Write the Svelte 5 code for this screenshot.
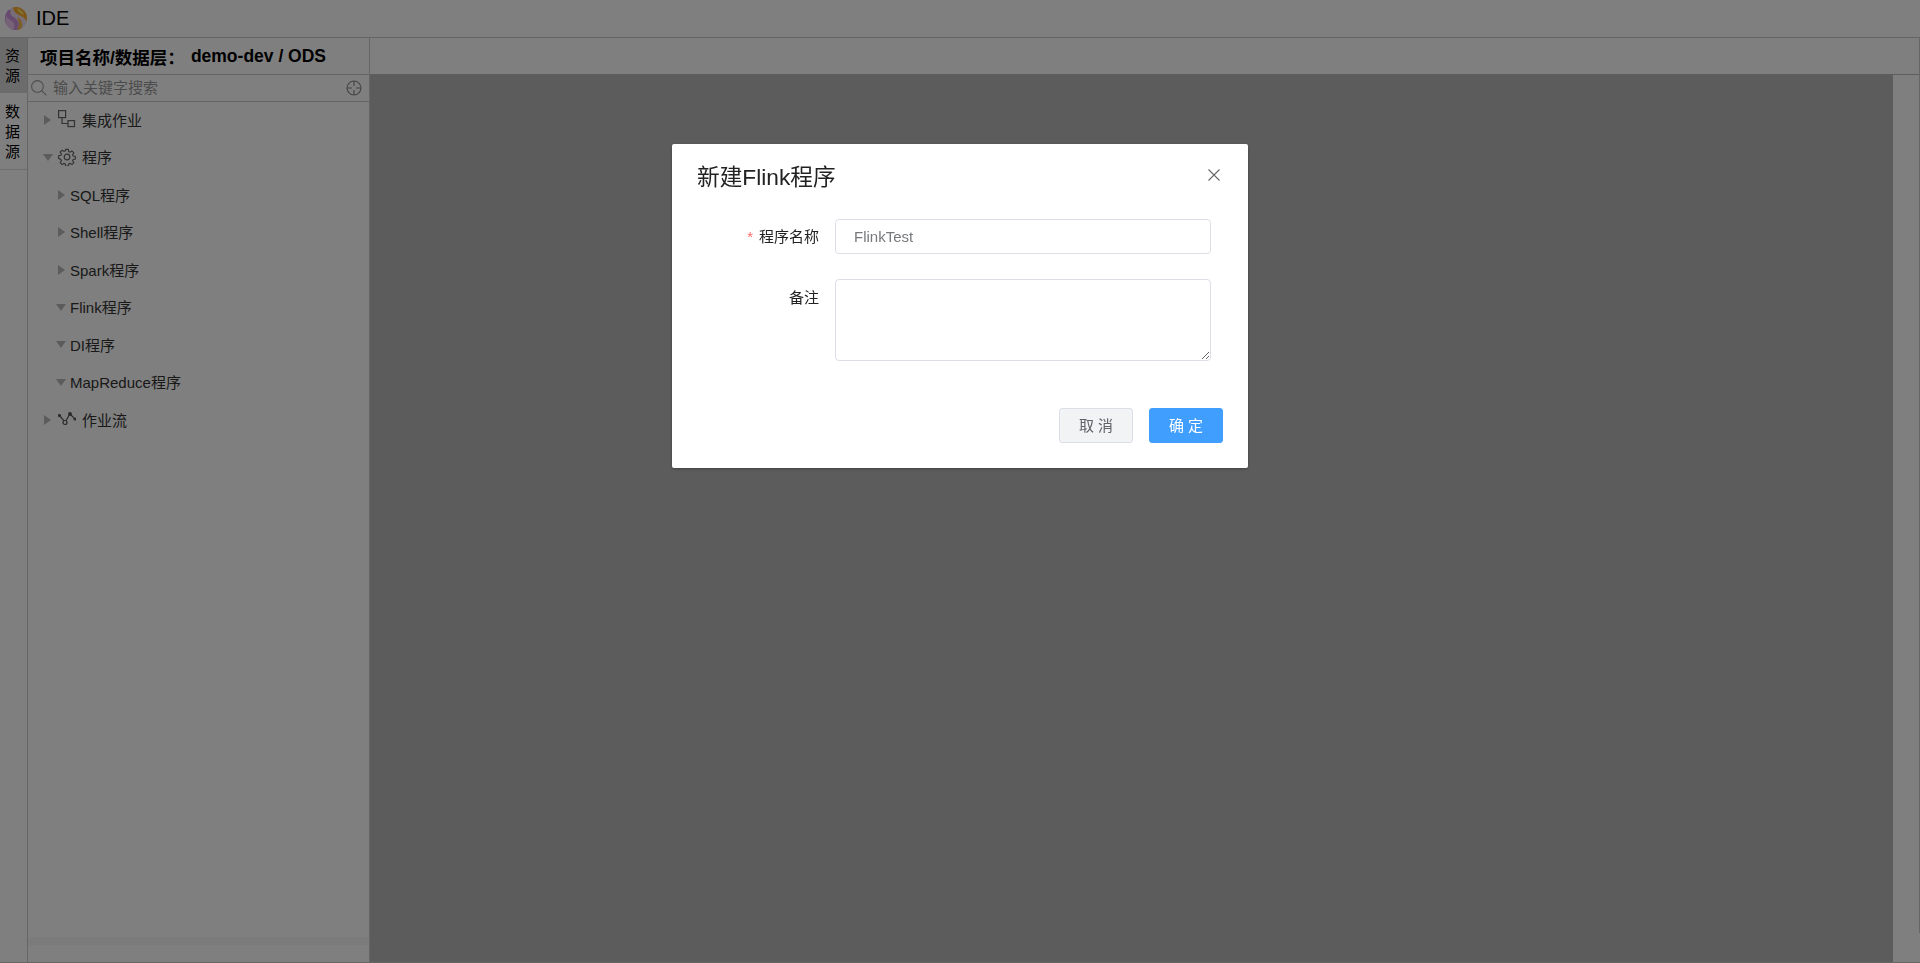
<script lang="ts">
	// tree rows of the resource panel
	const rows = [
		{ label: '集成作业', open: false, icon: 'flow', depth: 0 },
		{ label: '程序', open: true, icon: 'gear', depth: 0 },
		{ label: 'SQL程序', open: false, depth: 1 },
		{ label: 'Shell程序', open: false, depth: 1 },
		{ label: 'Spark程序', open: false, depth: 1 },
		{ label: 'Flink程序', open: true, depth: 1 },
		{ label: 'DI程序', open: true, depth: 1 },
		{ label: 'MapReduce程序', open: true, depth: 1 },
		{ label: '作业流', open: false, icon: 'line', depth: 0 }
	];
</script>

<div class="page">
	<header class="topbar">
		<svg class="logo" viewBox="0 0 22 23" width="22" height="23">
			<defs>
				<clipPath id="ball"><ellipse cx="11" cy="11.500" rx="11" ry="11.500" /></clipPath>
			</defs>
			<g clip-path="url(#ball)">
				<rect width="22" height="23" fill="#f0dcf0" />
				<path d="M0 3h6c-2 4 1 6 4 8 4 3 5 7 2 12H0z" fill="#cf96dc" />
				<path d="M1 9c2 3 5 4 7 6 2 2 2 5 0 8H5C2 20 0 15 1 9z" fill="#eec4ee" />
				<path d="M8 0h14v19c1-5-2-8-6-10-4-2-8-4-8-9z" fill="#fbac2a" />
				<path d="M12 1c3 1 6 3 7 7-3-1-6-3-7-7z" fill="#ffe466" />
				<path d="M12 10c3 1 6 4 5 10l-2 3h-3c3-4 2-9 0-13z" fill="#f8be50" />
			</g>
		</svg>
		<span class="app-name">IDE</span>
	</header>

	<div class="body">
		<nav class="rail">
			<div class="tab active">资<br />源</div>
			<div class="tab">数<br />据<br />源</div>
		</nav>

		<aside class="side">
			<div class="project">
				<span>项目名称/数据层：</span>
				<span class="project-value">demo-dev / ODS</span>
			</div>
			<div class="search">
				<svg viewBox="0 0 16 16" width="17" height="17" fill="none" stroke="#999" stroke-width="1">
					<circle cx="7" cy="7" r="5.500" />
					<path d="M11 11l4.500 4.500" />
				</svg>
				<span class="placeholder">输入关键字搜索</span>
				<svg class="target" viewBox="0 0 16 16" width="16" height="16" fill="none" stroke="#888" stroke-width="1.100">
					<circle cx="8" cy="8" r="7" />
					<path d="M8 1v5M8 10v5M1 8h5M10 8h5" />
				</svg>
			</div>
			<ul class="tree">
				{#each rows as row}
					<li class="row" class:sub={row.depth === 1}>
						<i class="caret" class:open={row.open}></i>
						{#if row.icon === 'flow'}
							<svg class="ico" viewBox="0 0 18 18" width="18" height="18" fill="none" stroke="#666" stroke-width="1.200">
								<rect x="0.600" y="0.600" width="7" height="7" />
								<rect x="10" y="10.600" width="6.500" height="6" />
								<path d="M4 7.500v6h6" />
							</svg>
						{:else if row.icon === 'gear'}
							<svg class="ico" viewBox="0 0 18 18" width="18" height="18" fill="none" stroke="#666" stroke-width="1.200">
								<circle cx="9" cy="9" r="2.800" />
								<path d="M7.600 1h2.800l.4 2.300 1.400.6 2-1.300 2 2-1.300 2 .6 1.400 2.300.4v2.800l-2.300.4-.6 1.400 1.300 2-2 2-2-1.300-1.400.6-.4 2.300H7.600l-.4-2.300-1.400-.6-2 1.300-2-2 1.300-2-.6-1.400L.2 10.400V7.600l2.300-.4.600-1.400-1.300-2 2-2 2 1.300 1.400-.6z" transform="translate(0.450 0.450) scale(0.95)" />
							</svg>
						{:else if row.icon === 'line'}
							<svg class="ico" viewBox="0 0 18 18" width="18" height="18" fill="none" stroke="#555" stroke-width="1.200">
								<circle cx="1.500" cy="5.500" r="1" fill="#555" />
								<circle cx="7" cy="12.500" r="2" />
								<circle cx="12" cy="4" r="1.300" fill="#555" />
								<circle cx="17" cy="9" r="1" fill="#555" />
								<path d="M2.300 6.500L6 10.800M8 10.800l3.200-5.800M13 5l3.300 3.300" />
							</svg>
						{/if}
						<span>{row.label}</span>
					</li>
				{/each}
			</ul>
			<div class="hscroll"></div>
		</aside>

		<main class="content">
			<div class="tabs-strip"></div>
			<div class="work">
				<div class="canvas"></div>
				<div class="gutter"></div>
			</div>
		</main>
	</div>

	<div class="overlay">
		<section class="dialog">
			<div class="dialog-head">
				<h2>新建Flink程序</h2>
				<svg class="close" viewBox="0 0 12 12" width="12" height="12" stroke="#666" stroke-width="1.100">
					<path d="M.500.500l11 11M11.500.500l-11 11" />
				</svg>
			</div>
			<form class="form">
				<div class="field">
					<label class="required" for="name">程序名称</label>
					<input id="name" class="input" value="FlinkTest" />
				</div>
				<div class="field">
					<label class="note-label" for="note">备注</label>
					<textarea id="note" class="input area"></textarea>
				</div>
			</form>
			<div class="dialog-foot">
				<button type="button" class="btn">取 消</button>
				<button type="button" class="btn primary">确 定</button>
			</div>
		</section>
	</div>
</div>

<style>
	:global(body) {
		margin: 0;
		overflow: hidden;
	}

	.page {
		height: 963px;
		display: flex;
		flex-direction: column;
		background: #fff;
		color: #000;
		font-family: "Liberation Sans", "Noto Sans CJK SC", sans-serif;
		box-sizing: border-box;
		border-bottom: 1px solid #ccc;
	}

	.topbar {
		height: 37px;
		flex: none;
		display: flex;
		align-items: center;
		padding-left: 5px;
		border-bottom: 1px solid #ccc;
	}

	.app-name {
		margin-left: 9px;
		margin-top: -1px;
		font-size: 20px;
		color: #000;
	}

	.body {
		flex: 1;
		min-height: 0;
		display: flex;
	}

	.rail {
		width: 27px;
		flex: none;
		border-right: 1px solid #ccc;
	}

	.tab {
		padding: 8px 5px;
		font-size: 15px;
		line-height: 20px;
		border-bottom: 1px solid #ddd;
	}

	.tab.active {
		height: 39px;
		background: #d8d8d8;
		border-bottom: none;
	}

	.tab:not(.active) {
		height: 60px;
		padding-top: 9px;
		padding-bottom: 7px;
	}

	.side {
		width: 341px;
		flex: none;
		display: flex;
		flex-direction: column;
		border-right: 1px solid #ccc;
	}

	.project {
		height: 36px;
		flex: none;
		display: flex;
		align-items: center;
		padding-left: 12px;
		font-size: 17.500px;
		font-weight: bold;
		border-bottom: 1px solid #ccc;
	}

	.project-value {
		margin-left: 6px;
	}

	.search {
		height: 26px;
		flex: none;
		display: flex;
		align-items: center;
		padding: 0 7px 0 2px;
		border-bottom: 1px solid #ccc;
	}

	.search svg {
		margin-top: -1px;
	}

	.placeholder {
		margin-left: 6px;
		margin-top: -3px;
		font-size: 15px;
		color: #999;
		flex: 1;
	}

	.tree {
		list-style: none;
		margin: -1.400px 0 0;
		padding: 0;
		flex: 1;
		font-size: 15px;
		color: #333;
	}

	.row {
		height: 37.5px;
		display: flex;
		align-items: center;
		padding-left: 16px;
	}

	.row.sub {
		padding-left: 30px;
	}

	.caret {
		width: 0;
		height: 0;
		border-left: 7px solid #b8b8b8;
		border-top: 5.500px solid transparent;
		border-bottom: 5.500px solid transparent;
		margin-top: 1px;
		margin-right: 7px;
	}

	.row.sub .caret {
		margin-right: 5px;
	}

	.caret.open {
		border-left: 5px solid transparent;
		border-right: 5px solid transparent;
		border-top: 7px solid #b8b8b8;
		border-bottom: none;
		margin-left: -1px;
		margin-right: 5px;
	}

	.row.sub .caret.open {
		margin-left: -2px;
		margin-right: 4px;
	}

	.ico {
		margin-right: 6px;
	}

	.hscroll {
		height: 8px;
		margin-bottom: 17px;
		background: #f7f7f7;
	}

	.content {
		flex: 1;
		min-width: 0;
		display: flex;
		flex-direction: column;
	}

	.tabs-strip {
		height: 36px;
		flex: none;
		border-bottom: 1px solid #bbb;
		border-right: 1px solid #ccc;
	}

	.work {
		flex: 1;
		display: flex;
		min-height: 0;
	}

	.canvas {
		flex: 1;
		background: #b8b8b8;
	}

	.gutter {
		width: 26px;
		border-right: 1px solid #ccc;
		margin-bottom: 29px;
	}

	.overlay {
		position: fixed;
		inset: 0;
		background: rgba(0, 0, 0, 0.5);
	}

	.dialog {
		box-sizing: border-box;
		width: 576px;
		height: 324px;
		margin: 144px auto 0;
		background: #fff;
		border-radius: 2px;
		box-shadow: 0 1px 3px rgba(0, 0, 0, 0.3);
		padding: 0 25px;
		display: flex;
		flex-direction: column;
	}

	.dialog-head {
		display: flex;
		align-items: center;
		justify-content: space-between;
		height: 62px;
		margin-bottom: 2px;
	}

	.dialog-head h2 {
		margin: 0;
		font-size: 22.700px;
		font-weight: normal;
		color: #222;
	}

	.close {
		margin-right: 3px;
		margin-top: -1px;
	}

	.form {
		display: flex;
		flex-direction: column;
		gap: 25px;
		padding-top: 11px;
	}

	.field {
		display: flex;
		gap: 16px;
	}

	.field label {
		width: 122px;
		text-align: right;
		font-size: 15px;
		line-height: 35px;
		color: #222;
	}

	.note-label {
		padding-top: 1px;
	}

	.required::before {
		content: '*';
		color: #f56c6c;
		margin-right: 6px;
	}

	.input {
		box-sizing: border-box;
		width: 376px;
		height: 35px;
		margin: 0;
		padding: 0 18px;
		border: 1px solid #dcdfe6;
		border-radius: 4px;
		font: 15px "Liberation Sans", sans-serif;
		color: #77797d;
		outline: none;
	}

	.area {
		height: 82px;
		padding: 5px 15px;
		display: block;
		resize: vertical;
	}

	.dialog-foot {
		display: flex;
		justify-content: flex-end;
		gap: 16px;
		margin-top: 47px;
	}

	.btn {
		width: 74px;
		height: 35px;
		padding: 0 0 2px;
		border: 1px solid #dcdfe6;
		border-radius: 3px;
		background: #f2f3f5;
		color: #606266;
		font: 15px "Liberation Sans", "Noto Sans CJK SC", sans-serif;
	}

	.btn.primary {
		background: #409eff;
		border-color: #409eff;
		color: #fff;
	}
</style>
